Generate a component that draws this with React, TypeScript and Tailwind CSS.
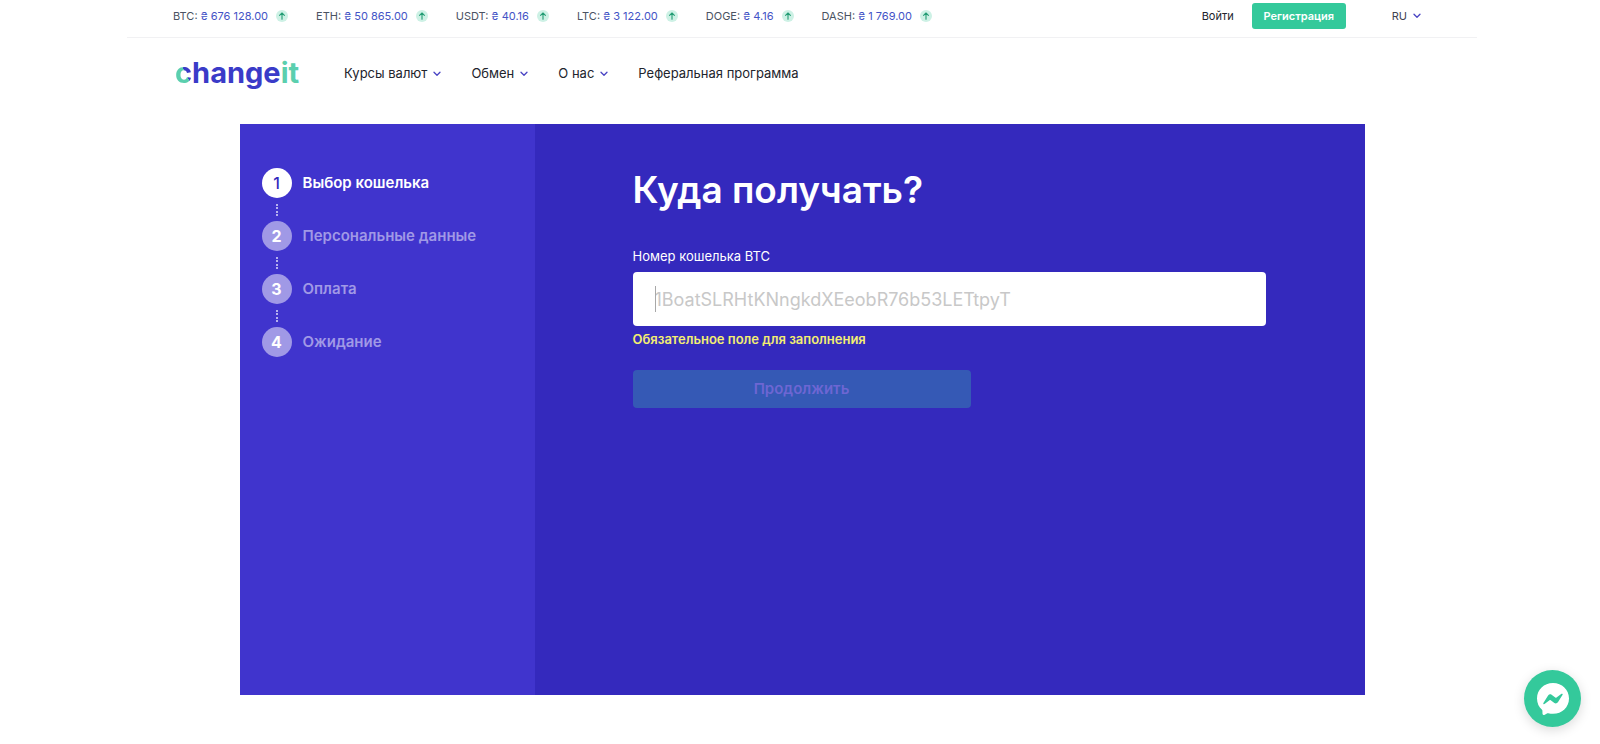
import React, { useState } from "react";
import clsx from "clsx";

interface Rate {
  code: string;
  price: string;
}

interface NavItem {
  label: string;
  hasMenu: boolean;
}

const RATES: Rate[] = [
  { code: "BTC", price: "676 128.00" },
  { code: "ETH", price: "50 865.00" },
  { code: "USDT", price: "40.16" },
  { code: "LTC", price: "3 122.00" },
  { code: "DOGE", price: "4.16" },
  { code: "DASH", price: "1 769.00" },
];

const NAV_ITEMS: NavItem[] = [
  { label: "Курсы валют", hasMenu: true },
  { label: "Обмен", hasMenu: true },
  { label: "О нас", hasMenu: true },
  { label: "Реферальная программа", hasMenu: false },
];

const STEPS = ["Выбор кошелька", "Персональные данные", "Оплата", "Ожидание"];

const Chevron: React.FC = () => (
  <svg viewBox="0 0 8 6" className="w-2 h-1.5" fill="none" aria-hidden="true">
    <path
      d="M1 1.2 4 4.3 7 1.2"
      stroke="#4a45c4"
      strokeWidth="1.3"
      strokeLinecap="round"
      strokeLinejoin="round"
    />
  </svg>
);

const ArrowUpBadge: React.FC = () => (
  <svg viewBox="0 0 12 12" className="w-3 h-3" fill="none" aria-hidden="true">
    <circle cx="6" cy="6" r="6" fill="#cdf1e5" />
    <path
      d="M6 9.2V3.2M3.6 5.4 6 3l2.4 2.4"
      stroke="#239c74"
      strokeWidth="1.1"
      strokeLinecap="round"
      strokeLinejoin="round"
    />
  </svg>
);

const TopBar: React.FC = () => (
  <div className="flex h-[38px] items-start justify-between border-b border-[#f1f1f3] pl-[46px] pr-14">
    <ul className="flex h-8 items-center gap-7 text-[11px]">
      {RATES.map((rate) => (
        <li key={rate.code} className="flex items-center gap-2 whitespace-nowrap">
          <span className="text-[#4b5362]">
            {rate.code}: <span className="text-[#4353c6]">₴ {rate.price}</span>
          </span>
          <ArrowUpBadge />
        </li>
      ))}
    </ul>

    <div className="flex h-8 items-center text-[11px]">
      <a href="#login" className="text-[#22242c]">
        Войти
      </a>
      <button
        type="button"
        className="ml-[18px] h-[26px] w-[94px] rounded-[3px] bg-[#34c99b] font-semibold text-white"
      >
        Регистрация
      </button>
      <button type="button" className="ml-[46px] flex items-center gap-1.5 text-[#3f4350]">
        RU
        <Chevron />
      </button>
    </div>
  </div>
);

const Logo: React.FC = () => (
  <a href="#home" className="text-[29px] leading-9 font-bold text-[#3a3bc8]">
    <span className="bg-linear-to-tr from-[#5bcfae] from-55% to-[#3a3bc8] to-55% bg-clip-text text-transparent">
      c
    </span>
    hange
    <span className="text-[#5bcfae]">it</span>
  </a>
);

const MainNav: React.FC = () => (
  <header className="flex h-[86px] items-start pt-[17px] pl-12">
    <Logo />
    <nav className="ml-[45px] flex h-[38px] items-center gap-[30px] text-[13px] text-[#22242c]">
      {NAV_ITEMS.map((item) =>
        item.hasMenu ? (
          <button key={item.label} type="button" className="flex items-center gap-1.5">
            {item.label}
            <Chevron />
          </button>
        ) : (
          <a key={item.label} href="#referral">
            {item.label}
          </a>
        )
      )}
    </nav>
  </header>
);

const StepList: React.FC<{ current: number }> = ({ current }) => (
  <ol className="w-[295px] shrink-0 bg-[#4034cd] pt-11 pl-[22px]">
    {STEPS.map((label, index) => {
      const active = index === current;
      return (
        <li key={label}>
          {/* Connector to the previous step */}
          {index > 0 && (
            <div className="flex h-[23px] w-[30px] items-center justify-center">
              <div className="h-3 border-l-2 border-dotted border-[#b5b0ee]" />
            </div>
          )}
          <div className="flex items-center gap-[11px]">
            <span
              className={clsx(
                "flex h-[30px] w-[30px] items-center justify-center rounded-full text-base",
                active ? "bg-white font-medium text-[#3429bd]" : "bg-[#a099e6] font-bold text-white"
              )}
            >
              {index + 1}
            </span>
            <span
              className={clsx(
                "text-[15px] font-semibold",
                active ? "text-white" : "text-[#a099e6]"
              )}
            >
              {label}
            </span>
          </div>
        </li>
      );
    })}
  </ol>
);

const WalletForm: React.FC = () => {
  const [wallet, setWallet] = useState("");

  return (
    <form className="flex-1 bg-[#3429bd] pt-10 pr-[99px] pl-[98px]">
      <h1 className="text-[37px] leading-[52px] font-semibold text-white">Куда получать?</h1>

      <label htmlFor="wallet" className="mt-[30px] block text-[13px] leading-5 text-white">
        Номер кошелька BTC
      </label>
      <div className="relative mt-1.5">
        <input
          id="wallet"
          type="text"
          value={wallet}
          onChange={(e) => setWallet(e.target.value)}
          placeholder="1BoatSLRHtKNngkdXEeobR76b53LETtpyT"
          className="block h-[54px] w-full rounded-[4px] bg-white px-[22px] text-[18px] text-[#22242c] caret-transparent outline-none placeholder:text-[#c8c8c8]"
        />
        <span className="absolute top-3.5 left-[22px] h-[26px] w-px bg-[#a8a8a8]" />
      </div>
      <p className="mt-[3px] text-[13px] leading-5 font-semibold text-[#f3ee72]">
        Обязательное поле для заполнения
      </p>

      <button
        type="submit"
        disabled={wallet === ""}
        className="mt-[21px] block h-[38px] w-[338px] rounded-[4px] bg-[#3559b5] text-[15px] font-semibold text-[#6d66d3]"
      >
        Продолжить
      </button>
    </form>
  );
};

const ChatButton: React.FC = () => (
  <button
    type="button"
    aria-label="Messenger"
    className="fixed right-[19px] bottom-[17px] flex h-[57px] w-[57px] items-center justify-center rounded-full bg-[#34c99b] shadow-[0_3px_12px_rgba(0,0,0,0.15)]"
  >
    <svg viewBox="0 0 32 32" className="w-8 h-8" aria-hidden="true">
      <path
        fill="#fff"
        d="M16 0C7 0 0 6.600 0 15.400c0 4.600 1.900 8.600 5 11.400.3.300.4.600.4 1l.1 3c0 .9.900 1.500 1.800 1.100l3.100-1.600c.3-.1.600-.1.900-.1 1.500.4 3 .6 4.700.6 9 0 16-6.600 16-15.400S25 0 16 0z"
      />
      <path
        fill="#34c99b"
        d="m6.400 19.900 4.700-7.400c.8-1.200 2.400-1.500 3.500-.7l3.700 2.800c.4.300.8.300 1.200 0l5-3.800c.7-.5 1.500.3 1.100 1l-4.700 7.500c-.8 1.200-2.400 1.500-3.500.7l-3.700-2.800c-.4-.3-.8-.3-1.200 0l-5 3.800c-.7.500-1.600-.3-1.100-1.100z"
      />
    </svg>
  </button>
);

export default function App() {
  return (
    <div className="min-h-screen bg-white pl-1 pb-12 font-['Inter','Liberation_Sans',sans-serif]">
      <div className="mx-auto max-w-[1350px]">
        <TopBar />
        <MainNav />
      </div>
      <main className="mx-auto flex min-h-[571px] max-w-[1125px]">
        <StepList current={0} />
        <WalletForm />
      </main>
      <ChatButton />
    </div>
  );
}
